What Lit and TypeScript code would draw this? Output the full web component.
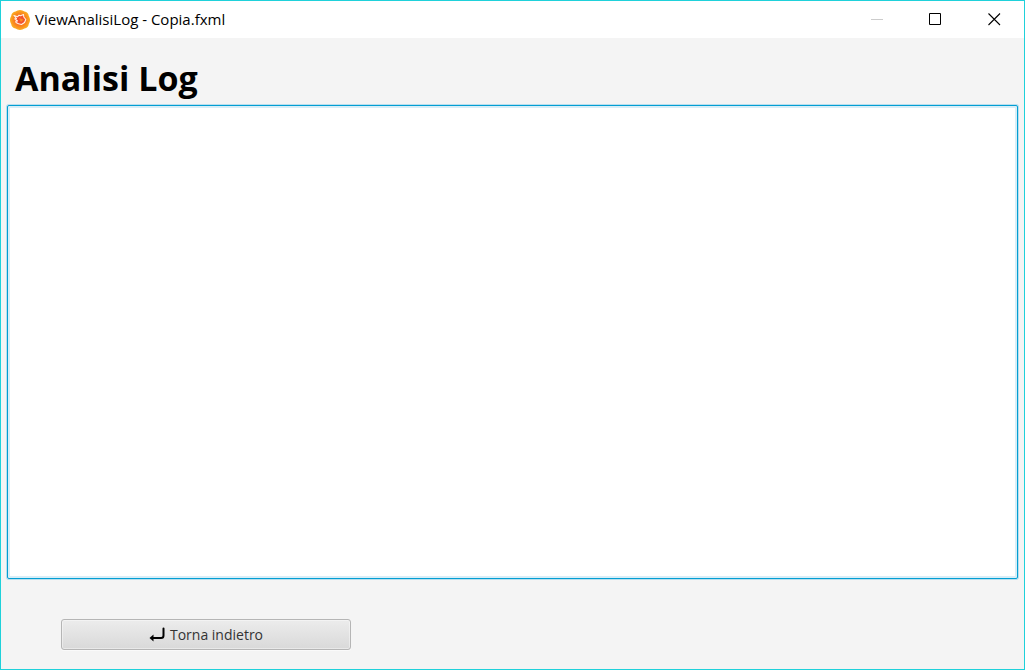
import { LitElement, html, css } from "lit";
import { customElement } from "lit/decorators.js";

@customElement("app-root")
export class AppRoot extends LitElement {
  static styles = css`
    :host {
      display: block;
      font-family: "Open Sans", "Noto Sans", sans-serif;
      color: #000;
    }
    * {
      box-sizing: border-box;
    }
    .window {
      display: flex;
      flex-direction: column;
      min-height: 100vh;
      border: 1px solid #1fd1da;
      background: #f4f4f4;
    }
    .titlebar {
      display: flex;
      align-items: center;
      height: 37px;
      padding-left: 8px;
      background: #fff;
    }
    .logo {
      width: 22px;
      height: 22px;
      margin-right: 4px;
    }
    .caption {
      flex: 1;
      font-size: 15px;
      line-height: 21px;
      white-space: nowrap;
    }
    .control {
      display: grid;
      place-items: center;
      width: 59px;
      height: 36px;
      padding: 0;
      border: 0;
      background: none;
    }
    .control svg {
      width: 13px;
      height: 13px;
      fill: none;
      stroke: #000;
    }
    .control:disabled svg {
      stroke: #ccc;
    }
    main {
      flex: 1;
      display: flex;
      flex-direction: column;
      padding: 16px 6px 19px;
    }
    .heading {
      margin: 0 0 3px;
      padding-left: 8px;
      font-size: 34px;
      line-height: 48px;
      font-weight: 700;
    }
    .log {
      flex: 1;
      display: block;
      width: 100%;
      margin: 0 0 40px;
      padding: 8px;
      border: 1px solid #039ed3;
      border-radius: 2px;
      outline: none;
      resize: none;
      background: #fff;
      box-shadow: 0 0 0 1px #b9dfee, inset 0 0 0 2px #d9eef7;
      font: 15px/20px "Open Sans", "Noto Sans", sans-serif;
    }
    .back {
      display: flex;
      align-items: center;
      justify-content: center;
      gap: 5px;
      width: 290px;
      height: 31px;
      margin-left: 54px;
      padding: 0;
      border: 1px solid #b5b5b5;
      border-radius: 3px;
      background: linear-gradient(#ececec, #d9d9d9);
      box-shadow: inset 0 0 0 1px rgba(255, 255, 255, 0.4), 0 1px 0 #fafafa;
      color: #333;
      font: 14px/20px "Open Sans", "Noto Sans", sans-serif;
    }
    .back svg {
      width: 16px;
      height: 16px;
    }
  `;

  render() {
    return html`
      <div class="window">
        <header class="titlebar">
          <svg class="logo" viewBox="0 0 22 22" aria-hidden="true">
            <defs>
              <radialGradient id="glow">
                <stop offset="0.4" stop-color="#f96a1c" />
                <stop offset="1" stop-color="#fbae20" />
              </radialGradient>
            </defs>
            <path
              fill="url(#glow)"
              d="M11 1C13 1 14 2 15.500 2.500C18 3 19.500 4.500 19.800 7C20.500 8.500 21 9.500 21 11C21 12.500 20.500 13.500 19.800 15C19.500 17.500 18 19 15.500 19.500C14 20 13 21 11 21C9 21 8 20 6.500 19.500C4 19 2.500 17.500 2.200 15C1.500 13.500 1 12.500 1 11C1 9.500 1.500 8.500 2.200 7C2.500 4.500 4 3 6.500 2.500C8 2 9 1 11 1Z"
            />
            <path
              fill="#f2512e"
              stroke="#fff3e6"
              stroke-width="1.100"
              stroke-linejoin="round"
              d="M5 6.500L8.500 7.800L10 6.200L11.500 6.800L14.500 5.500L14.800 8L16.800 10.500L15.500 13.500L12.500 15.500L9.500 14.800L7 13.500L6.800 12.200L8.500 12L5.800 9.800L7.500 9.500Z"
            />
            <path fill="#fa8a20" d="M10 9L14.500 10.500L12 13Z" />
          </svg>
          <span class="caption">ViewAnalisiLog - Copia.fxml</span>
          <button class="control" type="button" aria-label="Minimize" disabled>
            <svg viewBox="0 0 13 13"><path d="M1 6.500H13" /></svg>
          </button>
          <button class="control" type="button" aria-label="Maximize">
            <svg viewBox="0 0 13 13"><path d="M0.500 0.500H11.500V11.500H0.500Z" /></svg>
          </button>
          <button class="control" type="button" aria-label="Close">
            <svg viewBox="0 0 13 13"><path stroke-width="1.100" d="M0.500 0.500L12 12M12 0.500L0.500 12" /></svg>
          </button>
        </header>
        <main>
          <h1 class="heading" id="heading">Analisi Log</h1>
          <textarea class="log" aria-labelledby="heading"></textarea>
          <button class="back" type="button">
            <svg viewBox="0 0 16 16" aria-hidden="true">
              <path
                d="M14.500 1.500V8.500Q14.500 11 12 11H3"
                fill="none"
                stroke="#000"
                stroke-width="2"
                stroke-linecap="round"
              />
              <path d="M4.500 7.500V14.500L0.500 11Z" fill="#000" />
            </svg>
            <span>Torna indietro</span>
          </button>
        </main>
      </div>
    `;
  }
}
